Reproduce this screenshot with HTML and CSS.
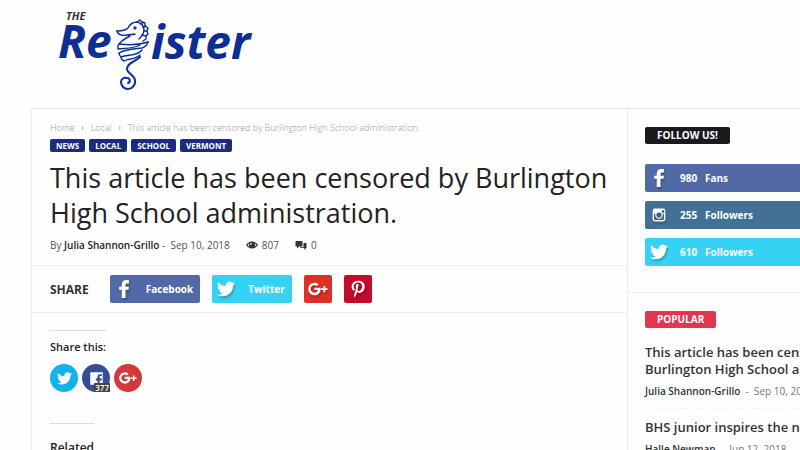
FILE: index.html
```html
<!DOCTYPE html>
<html lang="en">
<head>
    <meta charset="UTF-8">
    <meta name="viewport" content="width=device-width, initial-scale=1.0">
    <title>The Register</title>
    <link rel="stylesheet" href="styles.css">
</head>
<body>

<!-- Shared icons -->
<svg class="sprite" aria-hidden="true">
    <symbol id="facebook" viewBox="0 0 24 24">
        <path d="M9 24V13H5.500V9H9V6.500C9 2.500 11.200 0 15 0h3.500v4.500h-2.200C14.500 4.500 14 5.300 14 7v2h4.500l-.6 4H14v11z"/>
    </symbol>
    <symbol id="twitter" viewBox="0 0 24 24">
        <path d="M23.950 4.570a10 10 0 0 1-2.820.77 4.960 4.960 0 0 0 2.160-2.720c-.95.550-2 .960-3.130 1.190a4.920 4.920 0 0 0-8.380 4.480C7.690 8.090 4.070 6.130 1.640 3.160a4.820 4.820 0 0 0-.67 2.480c0 1.710.87 3.210 2.190 4.100a4.900 4.900 0 0 1-2.230-.62v.06a4.920 4.920 0 0 0 3.950 4.830 5 5 0 0 1-2.210.08 4.940 4.940 0 0 0 4.600 3.420A9.870 9.870 0 0 1 0 19.540a14 14 0 0 0 7.550 2.210c9.050 0 14-7.500 14-13.980 0-.21 0-.42-.02-.63a9.940 9.940 0 0 0 2.420-2.570z"/>
    </symbol>
    <symbol id="google" viewBox="0 0 24 24">
        <path d="M7.700 10.400v2.900h4.200c-.4 2-2 3.100-4.200 3.100a4.500 4.500 0 1 1 2.900-7.900l2.200-2.100A7.500 7.500 0 1 0 7.700 19.500c4.500 0 7.400-3 7.400-7.600l-.1-1.500zM18.500 8.500v2.700h-2.700v2.100h2.700V16h2.200v-2.700h2.700v-2.100h-2.700V8.500z"/>
    </symbol>
    <symbol id="pinterest" viewBox="0 0 24 24">
        <path d="M12.500 1C6.800 1 3.500 4.700 3.500 9c0 2.200 1.200 4.600 3 5.400l.7-.3.400-1.900c-.8-.8-1.300-1.800-1.300-3.200 0-3 2.300-5.500 6-5.500 3.300 0 5.200 2 5.200 4.900 0 3.500-1.700 6.200-4.100 6.200-1.400 0-2.400-1-2.100-2.400l1.500-5.300C12.800 5.100 10 4.800 9.200 7.300c-.4 1.200-.2 2.500.2 3.300L7 19.500c-.3 1.400 0 3.500.2 3.500.7 0 2-2.300 2.400-3.700l1-3.700c.6 1 1.900 1.600 3.200 1.600 4.300 0 7.200-4 7.200-8.800C21 4.200 17.400 1 12.500 1z"/>
    </symbol>
    <symbol id="instagram" viewBox="0 0 24 24">
        <path fill-rule="evenodd" d="M5 1h14a4 4 0 0 1 4 4v14a4 4 0 0 1-4 4H5a4 4 0 0 1-4-4V5a4 4 0 0 1 4-4zm12 3v4h4V4zM3.500 10v8.500a2 2 0 0 0 2 2h13a2 2 0 0 0 2-2V10h-2.300a6.500 6.500 0 1 1-12.400 0zM12 7.500a4.500 4.500 0 1 0 0 9 4.500 4.500 0 0 0 0-9z"/>
    </symbol>
    <symbol id="facebook-box" viewBox="0 0 24 24">
        <path fill-rule="evenodd" d="M2 2h20v20h-5v-7h3l.5-3.500H17V9.500c0-1 .4-1.500 1.500-1.500h2V5h-3C14.800 5 13.500 6.500 13.500 9v2.500H11V15h2.500v7H2z"/>
    </symbol>
    <symbol id="eye" viewBox="0 0 24 14">
        <path fill-rule="evenodd" d="M0 7c3-4.500 7-7 12-7s9 2.500 12 7c-3 4.500-7 7-12 7S3 11.500 0 7zm3 0c1.200 1.700 2.600 3 4.200 3.900a6 6 0 0 1 0-7.800C5.600 4 4.200 5.300 3 7zm18 0c-1.200-1.700-2.600-3-4.200-3.900a6 6 0 0 1 0 7.800C18.400 10 19.800 8.700 21 7zm-9-4a4 4 0 0 0-4 4h2a2 2 0 0 1 2-2z"/>
    </symbol>
    <symbol id="comments" viewBox="0 0 24 18">
        <path d="M1 0h14v11H8l-4 4v-4H1zM17 4h6v10h-2v4l-4-4h-7v-1.500h7z"/>
    </symbol>
</svg>

<header class="header">
    <a class="logo" href="#" aria-label="The Register">
        <svg width="204" height="86" viewBox="50 8 204 86">
            <text class="logo-the" x="66" y="20">THE</text>
            <text class="logo-name" x="58" y="58">Re</text>
            <text class="logo-name" x="151" y="59">ister</text>
            <!-- Seahorse standing in for the g -->
            <g class="seahorse">
                <path d="M117 31c4 0 8 0 11-3 2-4 5-6 9-6 4 1 7 4 7 8s-2 6-5 9"/>
                <path d="M117 31c1 4 6 5 10 4 3-1 6 0 8-1M130 36c-4 2-8 4-11 8 8 1 20 1 29-2"/>
                <path d="M137 22l3-2 2 2 3 1 0 3 3 2-1 3 1 3-2 2 0 3-3 2M141 24l2-2M143 27l3-1M144 31l3 0M142 35l4 1"/>
                <path d="M148 42c-1 3-2 5-6 6-8 1-16 1-23 5"/>
                <path d="M119 44c-2 2-1 3-1 5 8-1 15 0 22-4M119 53c0 1 1 3 2 4 7-3 15 0 21-7M121 57c0 2 1 3 3 4 5-3 11-1 16-6"/>
                <path class="tail" d="M140 57c-5 5-13 6-13 12 0 4 7 6 8 11 1 5-3 9-7 9-4 0-7-3-7-7 0-3 3-5 6-4 3 0 4 4 1 5"/>
                <circle cx="135" cy="28" r="1"/>
            </g>
        </svg>
    </a>
</header>

<div class="page">
    <main class="content">
        <div class="article-head">
            <nav class="breadcrumb" aria-label="Breadcrumb">
                <a href="#">Home</a>
                <span class="arrow"></span>
                <a href="#">Local</a>
                <span class="arrow"></span>
                <span>This article has been censored by Burlington High School administration.</span>
            </nav>
            <div class="tags">
                <a href="#">NEWS</a>
                <a href="#">LOCAL</a>
                <a href="#">SCHOOL</a>
                <a href="#">VERMONT</a>
            </div>
            <h1>This article has been censored by Burlington High School administration.</h1>
            <div class="meta">
                <span>By <a href="#">Julia Shannon-Grillo</a> - &nbsp;Sep 10, 2018</span>
                <span class="count"><svg width="12" height="8"><use href="#eye"/></svg>807</span>
                <span class="count"><svg width="12" height="9"><use href="#comments"/></svg>0</span>
            </div>
        </div>

        <div class="share">
            <span class="share-label">SHARE</span>
            <a class="btn facebook" href="#"><svg width="18" height="18"><use href="#facebook"/></svg><span>Facebook</span></a>
            <a class="btn twitter" href="#"><svg width="18" height="18"><use href="#twitter"/></svg><span>Twitter</span></a>
            <a class="btn square google" href="#" aria-label="Google+"><svg width="20" height="20"><use href="#google"/></svg></a>
            <a class="btn square pinterest" href="#" aria-label="Pinterest"><svg width="18" height="18"><use href="#pinterest"/></svg></a>
        </div>

        <div class="article-foot">
            <h2>Share this:</h2>
            <div class="circles">
                <a class="circle circle-twitter" href="#" aria-label="Twitter"><svg width="15" height="15"><use href="#twitter"/></svg></a>
                <a class="circle circle-facebook" href="#" aria-label="Facebook"><svg width="15" height="15"><use href="#facebook-box"/></svg><span class="badge">377</span></a>
                <a class="circle circle-google" href="#" aria-label="Google+"><svg width="18" height="18"><use href="#google"/></svg></a>
            </div>
            <h2 class="related">Related</h2>
        </div>
    </main>

    <aside class="sidebar">
        <section class="widget">
            <h3 class="label">FOLLOW US!</h3>
            <div class="followers">
                <a class="follow facebook" href="#"><svg width="18" height="18"><use href="#facebook"/></svg><span>980</span>Fans</a>
                <a class="follow instagram" href="#"><svg width="14" height="14"><use href="#instagram"/></svg><span>255</span>Followers</a>
                <a class="follow twitter" href="#"><svg width="18" height="18"><use href="#twitter"/></svg><span>610</span>Followers</a>
            </div>
        </section>
        <section class="widget">
            <h3 class="label label-red">POPULAR</h3>
            <article class="post">
                <h4><a href="#">This article has been censored by<br>Burlington High School administration.</a></h4>
                <p><a href="#">Julia Shannon-Grillo</a> &nbsp;- &nbsp;Sep 10, 2018</p>
            </article>
            <article class="post">
                <h4><a href="#">BHS junior inspires the next generation</a></h4>
                <p><a href="#">Halle Newman</a> &nbsp;- &nbsp;Jun 12, 2018</p>
            </article>
        </section>
    </aside>
</div>

</body>
</html>
```

FILE: styles.css
```css
* {
    box-sizing: border-box;
}
body {
    margin: 0;
    font-family: "Open Sans", sans-serif;
    background: #fefefe;
    color: #222;
    height: 100vh;
    overflow: hidden;
}
a {
    color: inherit;
    text-decoration: none;
}
h1, h2, h3, h4, p {
    margin: 0;
}
svg {
    display: block;
    fill: currentColor;
}
.sprite {
    display: none;
}

/* Header */
.header {
    height: 108px;
    padding: 8px 50px;
}
.logo {
    display: inline-block;
    color: #0b2f93;
}
.logo-the {
    font-size: 11px;
    font-weight: 700;
    font-style: italic;
    fill: #333;
}
.logo-name {
    font-size: 46px;
    font-weight: 700;
    font-style: italic;
}
.seahorse {
    fill: none;
    stroke: currentColor;
    stroke-width: 1.4;
    stroke-linecap: round;
    stroke-linejoin: round;
}
.seahorse .tail {
    stroke-width: 2;
}

/* Columns */
.page {
    display: grid;
    grid-template-columns: minmax(0, 1fr) 173px;
    margin-left: 31px;
    border-top: 1px solid #e9e9e9;
    border-left: 1px solid #eee;
}
.article-head {
    padding: 13px 18px 13px;
}
.breadcrumb {
    display: flex;
    align-items: center;
    gap: 7px;
    font-size: 9px;
    font-weight: 300;
    line-height: 12px;
    color: #999;
}
.arrow {
    border: 2px solid transparent;
    border-left-color: #b5b5b5;
    margin-right: -2px;
}
.tags {
    display: flex;
    gap: 4px;
    margin-top: 5px;
}
.tags a {
    padding: 0 6px;
    border-radius: 2px;
    background: #1c2b7c;
    color: #fff;
    font-size: 8px;
    font-weight: 700;
    line-height: 13px;
}
h1 {
    margin-top: 8px;
    font-size: 27px;
    font-weight: 400;
    line-height: 35px;
}
.meta {
    display: flex;
    gap: 16px;
    margin-top: 8px;
    font-size: 10px;
    line-height: 14px;
    color: #555;
}
.meta a {
    font-weight: 600;
    color: #222;
}
.count {
    display: flex;
    align-items: center;
    gap: 4px;
}
.count svg {
    color: #333;
}

/* Share bar */
.share {
    display: flex;
    align-items: center;
    gap: 12px;
    padding: 9px 18px;
    border-top: 1px solid #eee;
    border-bottom: 1px solid #eee;
}
.share-label {
    margin-right: 9px;
    font-size: 12px;
    font-weight: 700;
    color: #333;
}
.btn {
    display: flex;
    align-items: center;
    gap: 13px;
    height: 28px;
    padding: 0 7px 0 5px;
    border-radius: 2px;
    color: #fff;
    font-size: 10px;
    font-weight: 700;
}
.btn svg, .follow svg {
    filter: drop-shadow(1px 2px 1px rgba(0, 0, 0, 0.25));
}
.square {
    justify-content: center;
    width: 28px;
    padding: 0;
}
.facebook {
    background: #516aa7;
}
.twitter {
    background: #35d2f4;
}
.google {
    background: #df2f27;
}
.pinterest {
    background: #c30b2b;
}
.instagram {
    background: #437195;
}

/* End of article */
.article-foot {
    padding: 17px 18px;
}
h2 {
    width: fit-content;
    padding-top: 8px;
    border-top: 1px solid #ddd;
    font-size: 11px;
    font-weight: 600;
    line-height: 16px;
    color: #222;
}
.circles {
    display: flex;
    gap: 4px;
    margin-top: 9px;
}
.circle {
    position: relative;
    display: flex;
    align-items: center;
    justify-content: center;
    width: 28px;
    height: 28px;
    border-radius: 50%;
    color: #fff;
}
.circle-twitter {
    background: #10b4ec;
}
.circle-facebook {
    background: #354f97;
}
.circle-google {
    background: #d3393a;
}
.badge {
    position: absolute;
    right: 0;
    bottom: 0;
    padding: 0 1px;
    background: #444;
    font-size: 8px;
    font-weight: 600;
    line-height: 9px;
}
.related {
    margin-top: 31px;
    padding-top: 16px;
    font-size: 12px;
}

/* Sidebar */
.sidebar {
    border-left: 1px solid #eee;
    overflow: hidden;
    white-space: nowrap;
}
.widget {
    padding: 18px 0 26px 17px;
    border-bottom: 1px solid #eee;
}
.label {
    width: fit-content;
    padding: 0 12px;
    border-radius: 2px;
    background: #1a1a1e;
    color: #fff;
    font-size: 10px;
    font-weight: 700;
    line-height: 17px;
}
.label-red {
    background: #e5344f;
}
.followers {
    display: grid;
    gap: 9px;
    margin-top: 20px;
}
.follow {
    display: grid;
    grid-template-columns: 28px 25px 1fr;
    align-items: center;
    height: 28px;
    padding-left: 7px;
    border-radius: 2px 0 0 2px;
    color: #fff;
    font-size: 10px;
    font-weight: 700;
}
.follow svg {
    justify-self: center;
    margin-right: 14px;
}
.post {
    padding-bottom: 10px;
    border-bottom: 1px dashed #f2f2f2;
}
.post h4 {
    padding-top: 10px;
    font-size: 13px;
    font-weight: 600;
    line-height: 17px;
    color: #333;
}
.label + .post h4 {
    padding-top: 16px;
}
.post p {
    margin-top: 6px;
    font-size: 10px;
    line-height: 14px;
    color: #777;
}
.post p a {
    font-weight: 600;
    color: #333;
}
```
